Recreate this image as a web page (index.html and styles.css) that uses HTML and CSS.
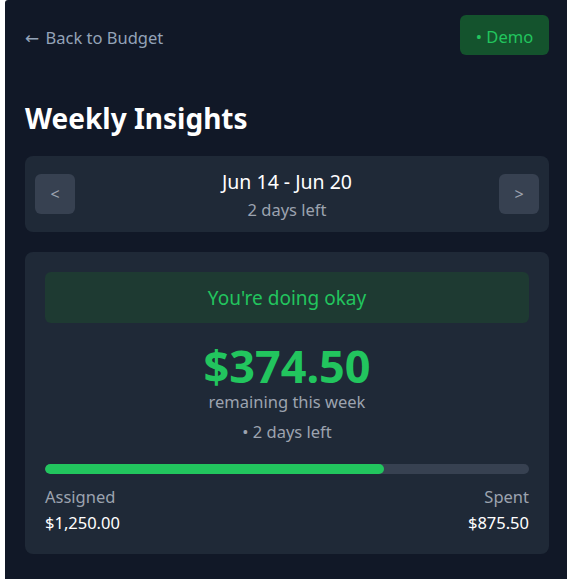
FILE: index.html
```html
<!DOCTYPE html>
<html lang="en">
<head>
<meta charset="utf-8">
<title>Weekly Insights</title>
<link rel="stylesheet" href="styles.css">
</head>
<body>
<div class="app">
  <header class="topbar">
    <a class="back" href="#"><span class="arrow">←</span> Back to Budget</a>
    <button class="demo">• Demo</button>
  </header>
  <h1 class="title">Weekly Insights</h1>
  <section class="week-nav">
    <button class="nav-btn">&lt;</button>
    <div class="week-info">
      <div class="week-range">Jun 14 - Jun 20</div>
      <div class="week-left">2 days left</div>
    </div>
    <button class="nav-btn">&gt;</button>
  </section>
  <section class="summary">
    <div class="status">You're doing okay</div>
    <div class="amount">$374.50</div>
    <div class="amount-label">remaining this week</div>
    <div class="days-left">• 2 days left</div>
    <div class="progress"><div class="progress-fill" style="width:70.04%"></div></div>
    <div class="totals">
      <div class="total">
        <div class="total-label">Assigned</div>
        <div class="total-value">$1,250.00</div>
      </div>
      <div class="total total-right">
        <div class="total-label">Spent</div>
        <div class="total-value">$875.50</div>
      </div>
    </div>
  </section>
</div>
</body>
</html>
```
FILE: styles.css
```css
html, body {
  margin: 0;
  padding: 0;
  background: #ffffff;
  height: 100%;
}
body {
  font-family: "Noto Sans", "Open Sans", sans-serif;
  overflow: hidden;
}
.app {
  margin-left: 5px;
  min-height: 100%;
  box-sizing: border-box;
  background: #111827;
  padding: 15px 18px 20px 20px;
  border-top-left-radius: 3px;
}
.topbar {
  display: flex;
  justify-content: space-between;
  align-items: center;
  height: 40px;
}
.back {
  color: #94a3b8;
  text-decoration: none;
  font-size: 16.5px;
  padding-top: 4px;
}
.arrow {
  font-family: "DejaVu Sans", sans-serif;
  font-size: 17px;
  margin-right: 2px;
}
.demo {
  width: 89px;
  height: 40px;
  border: none;
  border-radius: 6px;
  background: #14532d;
  color: #22c55e;
  font-family: inherit;
  font-size: 16.5px;
  padding: 3px 0 0;
}
.title {
  color: #ffffff;
  font-size: 28px;
  font-weight: 700;
  line-height: 34px;
  margin: 46px 0 21px;
}
.week-nav {
  display: flex;
  align-items: center;
  justify-content: space-between;
  background: #1f2937;
  border-radius: 8px;
  padding: 10px;
  height: 56px;
}
.nav-btn {
  width: 40px;
  height: 40px;
  border: none;
  border-radius: 6px;
  background: #374151;
  color: #9ca3af;
  font-family: inherit;
  font-size: 16px;
  padding: 0;
}
.week-info {
  text-align: center;
  align-self: flex-start;
  padding-top: 3px;
}
.week-range {
  color: #ffffff;
  font-size: 19.5px;
  line-height: 26px;
}
.week-left {
  color: #9ca3af;
  font-size: 16.5px;
  line-height: 28px;
  margin-top: 1px;
}
.summary {
  margin-top: 20px;
  background: #1f2937;
  border-radius: 8px;
  padding: 20px 20px 19px;
  text-align: center;
}
.status {
  background: #1e3a32;
  color: #22c55e;
  border-radius: 6px;
  height: 51px;
  line-height: 53px;
  font-size: 19px;
}
.amount {
  color: #22c55e;
  font-size: 45px;
  font-weight: 700;
  line-height: 50px;
  margin-top: 18px;
}
.amount-label {
  color: #9ca3af;
  font-size: 16.5px;
  line-height: 22px;
}
.days-left {
  color: #9ca3af;
  font-size: 16.5px;
  line-height: 24px;
  margin-top: 7px;
}
.progress {
  margin-top: 20px;
  height: 10px;
  border-radius: 5px;
  background: #374151;
  overflow: hidden;
}
.progress-fill {
  height: 100%;
  background: #22c55e;
  border-radius: 5px;
}
.totals {
  display: flex;
  justify-content: space-between;
  margin-top: 11px;
}
.total {
  text-align: left;
}
.total-right {
  text-align: right;
}
.total-label {
  color: #9ca3af;
  font-size: 16.5px;
  line-height: 24px;
}
.total-value {
  color: #ffffff;
  font-size: 16.5px;
  line-height: 25px;
  margin-top: 1px;
}
```
